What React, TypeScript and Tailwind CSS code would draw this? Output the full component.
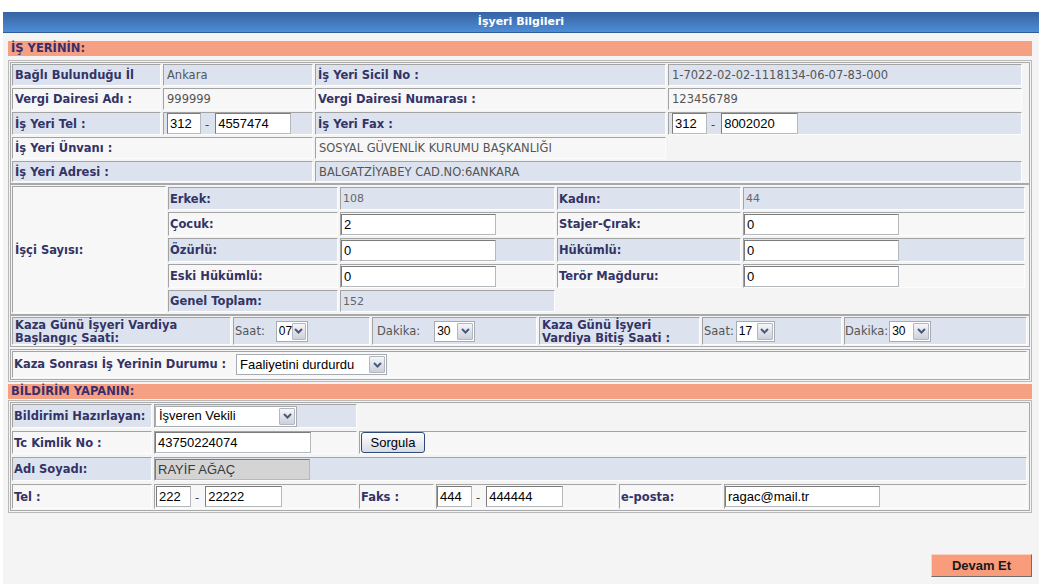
import clsx from 'clsx';
import type { ReactNode } from 'react';

type Tone = 'blue' | 'light' | 'none';

const toneClass: Record<Tone, string> = {
  blue: 'bg-[#dce3ef]',
  light: 'bg-[#f7f7f7]',
  none: 'bg-transparent',
};

const Cell = ({ children, tone = 'light', className }: { children?: ReactNode; tone?: Tone; className?: string }) => (
  <div
    className={clsx(
      'flex items-center border border-t-[#a3a3a3] border-l-[#a3a3a3] border-r-[#fdfdfd] border-b-[#fdfdfd]',
      toneClass[tone],
      className,
    )}
  >
    {children}
  </div>
);

const Label = ({ children }: { children: ReactNode }) => (
  <span className="mt-[2px] font-bold text-[#333366] whitespace-nowrap">{children}</span>
);

const Value = ({ children }: { children: ReactNode }) => (
  <span className="mt-[2px] text-[#555555] whitespace-nowrap">{children}</span>
);

const TextBox = ({ value, className, grey }: { value: string; className?: string; grey?: boolean }) => (
  <input
    readOnly
    value={value}
    className={clsx(
      "h-[21px] border border-[#b4b9be] border-t-[#7c7c7c] border-l-[#7c7c7c] px-[2px] font-['Liberation_Sans',Arial,sans-serif] text-[13px] outline-none",
      grey ? 'bg-[#d4d4d4] text-[#3a3a3a]' : 'bg-white text-black',
      className,
    )}
  />
);

const Dash = () => <span className="ml-[4px] mr-[6px] mt-[4px] text-[#444444]">-</span>;

const Combo = ({ value, className, small }: { value: string; className?: string; small?: boolean }) => (
  <div className={clsx('flex h-[21px] items-stretch border border-[#a5acb2] bg-white p-px', className)}>
    <span
      className={clsx(
        "flex flex-1 items-center font-['Liberation_Sans',Arial,sans-serif] text-black whitespace-nowrap",
        small ? 'pl-px text-[12px]' : 'pl-[2px] text-[13px]',
      )}
    >
      {value}
    </span>
    <span className="flex w-[16px] items-center justify-center rounded-[1px] border border-[#b3b7c4] bg-linear-to-b from-[#f6f6f8] to-[#cdd0da]">
      <svg width="9" height="6" viewBox="0 0 9 6">
        <path d="M1 1l3.5 3.5L8 1" stroke="#4b5a7c" strokeWidth="2" fill="none" />
      </svg>
    </span>
  </div>
);

const SectionTitle = ({ children, className }: { children: ReactNode; className?: string }) => (
  <div className={clsx('flex h-[15px] w-[1024px] items-center bg-[#f5a083] pl-[3px] pt-px font-bold text-[#3b2d6b]', className)}>
    {children}
  </div>
);

const App = () => {
  return (
    <div className="h-[584px] bg-white pt-[12px] pl-[3px] font-['DejaVu_Sans',Verdana,sans-serif] text-[11.5px]">
      <div className="flex h-[572px] flex-col bg-[#f4f4f4]">
        <div className="flex h-[21px] items-center justify-center border-b border-[#2f5b96] bg-linear-to-b from-[#3863a2] to-[#4d8dd6] text-[11px] font-bold text-white">
          İşyeri Bilgileri
        </div>

        <div className="flex flex-col pl-[5px]">
          <SectionTitle className="mt-[8px]">İŞ YERİNİN:</SectionTitle>

          <div className="mt-[4px] w-[1024px] border border-[#b9b9b9] p-px">
            {/* işyeri genel bilgileri */}
            <div className="border border-[#a9a9a9] p-px">
              <div className="grid w-[1010px] grid-cols-[149px_150px_351px_354px] grid-rows-[22px_22px_23px_22px_21px] gap-[2px]">
                <Cell tone="blue" className="pl-[2px]"><Label>Bağlı Bulunduğu İl</Label></Cell>
                <Cell tone="blue" className="pl-[3px]"><Value>Ankara</Value></Cell>
                <Cell tone="blue" className="pl-[2px]"><Label>İş Yeri Sicil No :</Label></Cell>
                <Cell tone="blue" className="pl-[3px]"><Value>1-7022-02-02-1118134-06-07-83-000</Value></Cell>

                <Cell className="pl-[2px]"><Label>Vergi Dairesi Adı :</Label></Cell>
                <Cell className="pl-[3px]"><Value>999999</Value></Cell>
                <Cell className="pl-[2px]"><Label>Vergi Dairesi Numarası :</Label></Cell>
                <Cell className="pl-[3px]"><Value>123456789</Value></Cell>

                <Cell tone="blue" className="pl-[2px]"><Label>İş Yeri Tel :</Label></Cell>
                <Cell tone="blue" className="pl-[3px]">
                  <TextBox value="312" className="w-[34px]" />
                  <Dash />
                  <TextBox value="4557474" className="w-[76px]" />
                </Cell>
                <Cell tone="blue" className="pl-[2px]"><Label>İş Yeri Fax :</Label></Cell>
                <Cell tone="blue" className="pl-[3px]">
                  <TextBox value="312" className="w-[35px]" />
                  <Dash />
                  <TextBox value="8002020" className="w-[77px]" />
                </Cell>

                <Cell className="col-span-2 pl-[2px]"><Label>İş Yeri Ünvanı :</Label></Cell>
                <Cell className="pl-[3px]"><Value>SOSYAL GÜVENLİK KURUMU BAŞKANLIĞI</Value></Cell>
                <div />

                <Cell tone="blue" className="col-span-2 pl-[2px]"><Label>İş Yeri Adresi :</Label></Cell>
                <Cell tone="blue" className="col-span-2 pl-[3px]"><Value>BALGATZİYABEY CAD.NO:6ANKARA</Value></Cell>
              </div>
            </div>

            {/* işçi sayısı */}
            <div className="flex gap-[2px] border border-[#a9a9a9] p-px">
              <Cell className="w-[154px] pl-[2px]"><Label>İşçi Sayısı:</Label></Cell>
              <div className="grid grid-cols-[170px_215px_184px_282px] grid-rows-[23px_24px_24px_24px_22px] gap-[2px] py-px">
                <Cell tone="blue" className="pl-px"><Label>Erkek:</Label></Cell>
                <Cell tone="blue" className="pl-[2px]"><span className="mt-[2px] text-[11px] text-[#666666]">108</span></Cell>
                <Cell tone="blue" className="pl-px"><Label>Kadın:</Label></Cell>
                <Cell tone="blue" className="pl-[2px]"><span className="mt-[2px] text-[11px] text-[#666666]">44</span></Cell>

                <Cell className="pl-px"><Label>Çocuk:</Label></Cell>
                <Cell><TextBox value="2" className="w-[155px]" /></Cell>
                <Cell className="pl-px"><Label>Stajer-Çırak:</Label></Cell>
                <Cell><TextBox value="0" className="w-[155px]" /></Cell>

                <Cell tone="blue" className="pl-px"><Label>Özürlü:</Label></Cell>
                <Cell tone="blue"><TextBox value="0" className="w-[155px]" /></Cell>
                <Cell tone="blue" className="pl-px"><Label>Hükümlü:</Label></Cell>
                <Cell tone="blue"><TextBox value="0" className="w-[155px]" /></Cell>

                <Cell className="pl-px"><Label>Eski Hükümlü:</Label></Cell>
                <Cell><TextBox value="0" className="w-[155px]" /></Cell>
                <Cell className="pl-px"><Label>Terör Mağduru:</Label></Cell>
                <Cell><TextBox value="0" className="w-[155px]" /></Cell>

                <Cell tone="blue" className="pl-px"><Label>Genel Toplam:</Label></Cell>
                <Cell tone="blue" className="pl-[2px]"><span className="mt-[2px] text-[11px] text-[#666666]">152</span></Cell>
              </div>
            </div>

            {/* vardiya saatleri */}
            <div className="border border-[#a9a9a9] p-px">
              <div className="grid grid-cols-[219px_137px_165px_161px_140px_183px] grid-rows-[28px] gap-[2px]">
                <Cell tone="blue" className="pl-[2px] leading-[13px]">
                  <Label>
                    Kaza Günü İşyeri Vardiya
                    <br />
                    Başlangıç Saati:
                  </Label>
                </Cell>
                <Cell tone="blue" className="pl-px">
                  <span className="mt-[2px] text-[#555555]">Saat:</span>
                  <Combo value="07" small className="ml-[11px] w-[32px]" />
                </Cell>
                <Cell tone="blue" className="pl-[4px]">
                  <span className="mt-[2px] text-[#555555]">Dakika:</span>
                  <Combo value="30" small className="ml-[14px] w-[41px]" />
                </Cell>
                <Cell tone="blue" className="pl-[2px] leading-[13px]">
                  <Label>
                    Kaza Günü İşyeri
                    <br />
                    Vardiya Bitiş Saati :
                  </Label>
                </Cell>
                <Cell tone="blue" className="pl-px">
                  <span className="mt-[2px] text-[#555555]">Saat:</span>
                  <Combo value="17" small className="ml-[2px] w-[39px]" />
                </Cell>
                <Cell tone="blue">
                  <span className="mt-[2px] text-[#555555]">Dakika:</span>
                  <Combo value="30" small className="ml-px w-[42px]" />
                </Cell>
              </div>
            </div>

            <div className="mt-[2px] border border-[#a9a9a9] p-px">
              <Cell className="h-[27px] w-[1015px] pl-px">
                <span className="w-[222px]"><Label>Kaza Sonrası İş Yerinin Durumu :</Label></span>
                <Combo value="Faaliyetini durdurdu" className="w-[151px]" />
              </Cell>
            </div>
          </div>

          <SectionTitle className="mt-[2px]">BİLDİRİM YAPANIN:</SectionTitle>

          <div className="mt-px w-[1024px] border border-[#b9b9b9] p-px">
            <div className="border border-[#a9a9a9] p-px">
              <div className="grid grid-cols-[140px_203px_75px_181px_103px_303px] grid-rows-[24px_23px_24px_25px] gap-x-[2px] gap-y-[3px]">
                <Cell tone="blue" className="pl-px"><Label>Bildirimi Hazırlayan:</Label></Cell>
                <Cell tone="blue"><Combo value="İşveren Vekili" className="w-[142px]" /></Cell>
                <div className="col-span-4" />

                <Cell className="pl-px"><Label>Tc Kimlik No :</Label></Cell>
                <Cell><TextBox value="43750224074" className="w-[156px]" /></Cell>
                <Cell className="col-span-4 pl-px">
                  <button className="h-[21px] w-[64px] rounded-[3px] border border-[#2c4a78] bg-linear-to-b from-white to-[#d9dbe4] font-['Liberation_Sans',Arial,sans-serif] text-[13px] text-black">
                    Sorgula
                  </button>
                </Cell>

                <Cell tone="blue" className="pl-px"><Label>Adı Soyadı:</Label></Cell>
                <Cell tone="blue" className="col-span-5">
                  <TextBox value="RAYİF AĞAÇ" grey className="h-[20px] w-[155px]" />
                </Cell>

                <Cell className="pl-px"><Label>Tel :</Label></Cell>
                <Cell className="pl-px">
                  <TextBox value="222" className="w-[35px]" />
                  <Dash />
                  <TextBox value="22222" className="w-[77px]" />
                </Cell>
                <Cell className="pl-px"><Label>Faks :</Label></Cell>
                <Cell>
                  <TextBox value="444" className="w-[35px]" />
                  <Dash />
                  <TextBox value="444444" className="w-[77px]" />
                </Cell>
                <Cell className="pl-px"><Label>e-posta:</Label></Cell>
                <Cell><TextBox value="ragac@mail.tr" className="w-[155px]" /></Cell>
              </div>
            </div>
          </div>

          <div className="mt-[41px] flex w-[1024px] justify-end">
            <button className="h-[23px] w-[101px] border border-t-[#fbd3c4] border-l-[#fbd3c4] border-r-[#6e6e6e] border-b-[#6e6e6e] bg-[#f89c7c] font-['Liberation_Sans',Arial,sans-serif] text-[13px] font-bold text-[#1a1a1a]">
              Devam Et
            </button>
          </div>
        </div>
      </div>
    </div>
  );
};

export default App;
